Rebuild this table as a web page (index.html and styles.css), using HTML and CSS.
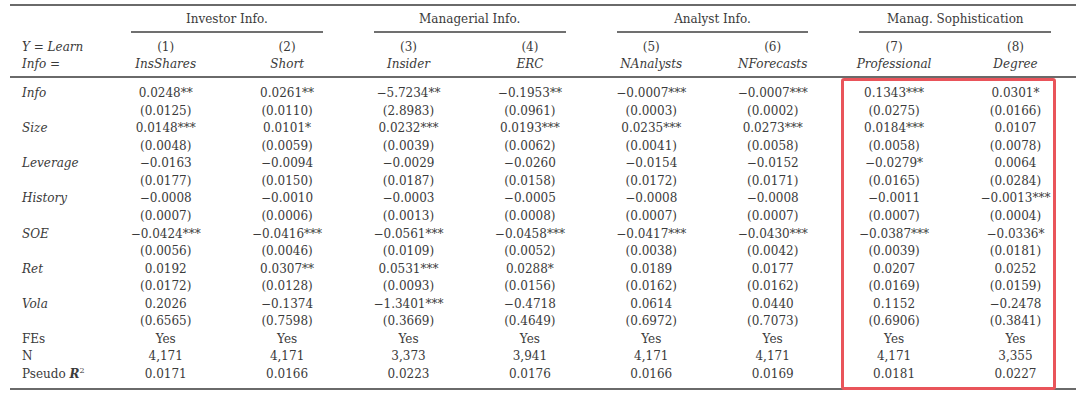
FILE: index.html
```html
<!DOCTYPE html>
<html>
<head>
<meta charset="utf-8">
<link rel="stylesheet" href="styles.css">
</head>
<body>
<div class="page">
<table class="reg">
  <colgroup>
    <col class="c-label">
    <col class="c-num"><col class="c-num"><col class="c-num"><col class="c-num">
    <col class="c-num"><col class="c-num"><col class="c-num"><col class="c-num">
  </colgroup>
  <thead>
    <tr class="grp">
      <th></th>
      <th colspan="2"><div class="gline">Investor Info.</div></th>
      <th colspan="2"><div class="gline">Managerial Info.</div></th>
      <th colspan="2"><div class="gline">Analyst Info.</div></th>
      <th colspan="2"><div class="gline">Manag. Sophistication</div></th>
    </tr>
    <tr class="hd1">
      <th class="lbl"><i>Y</i> = <i>Learn</i></th>
      <th>(1)</th><th>(2)</th><th>(3)</th><th>(4)</th><th>(5)</th><th>(6)</th><th>(7)</th><th>(8)</th>
    </tr>
    <tr class="hd2">
      <th class="lbl"><i>Info</i> =</th>
      <th><i>InsShares</i></th><th><i>Short</i></th><th><i>Insider</i></th><th><i>ERC</i></th>
      <th><i>NAnalysts</i></th><th><i>NForecasts</i></th><th><i>Professional</i></th><th><i>Degree</i></th>
    </tr>
  </thead>
  <tbody>
    <tr class="first"><td class="lbl"><i>Info</i></td><td>0.0248**</td><td>0.0261**</td><td>−5.7234**</td><td>−0.1953**</td><td>−0.0007***</td><td>−0.0007***</td><td>0.1343***</td><td>0.0301*</td></tr>
    <tr><td></td><td>(0.0125)</td><td>(0.0110)</td><td>(2.8983)</td><td>(0.0961)</td><td>(0.0003)</td><td>(0.0002)</td><td>(0.0275)</td><td>(0.0166)</td></tr>
    <tr><td class="lbl"><i>Size</i></td><td>0.0148***</td><td>0.0101*</td><td>0.0232***</td><td>0.0193***</td><td>0.0235***</td><td>0.0273***</td><td>0.0184***</td><td>0.0107</td></tr>
    <tr><td></td><td>(0.0048)</td><td>(0.0059)</td><td>(0.0039)</td><td>(0.0062)</td><td>(0.0041)</td><td>(0.0058)</td><td>(0.0058)</td><td>(0.0078)</td></tr>
    <tr><td class="lbl"><i>Leverage</i></td><td>−0.0163</td><td>−0.0094</td><td>−0.0029</td><td>−0.0260</td><td>−0.0154</td><td>−0.0152</td><td>−0.0279*</td><td>0.0064</td></tr>
    <tr><td></td><td>(0.0177)</td><td>(0.0150)</td><td>(0.0187)</td><td>(0.0158)</td><td>(0.0172)</td><td>(0.0171)</td><td>(0.0165)</td><td>(0.0284)</td></tr>
    <tr><td class="lbl"><i>History</i></td><td>−0.0008</td><td>−0.0010</td><td>−0.0003</td><td>−0.0005</td><td>−0.0008</td><td>−0.0008</td><td>−0.0011</td><td>−0.0013***</td></tr>
    <tr><td></td><td>(0.0007)</td><td>(0.0006)</td><td>(0.0013)</td><td>(0.0008)</td><td>(0.0007)</td><td>(0.0007)</td><td>(0.0007)</td><td>(0.0004)</td></tr>
    <tr><td class="lbl"><i>SOE</i></td><td>−0.0424***</td><td>−0.0416***</td><td>−0.0561***</td><td>−0.0458***</td><td>−0.0417***</td><td>−0.0430***</td><td>−0.0387***</td><td>−0.0336*</td></tr>
    <tr><td></td><td>(0.0056)</td><td>(0.0046)</td><td>(0.0109)</td><td>(0.0052)</td><td>(0.0038)</td><td>(0.0042)</td><td>(0.0039)</td><td>(0.0181)</td></tr>
    <tr><td class="lbl"><i>Ret</i></td><td>0.0192</td><td>0.0307**</td><td>0.0531***</td><td>0.0288*</td><td>0.0189</td><td>0.0177</td><td>0.0207</td><td>0.0252</td></tr>
    <tr><td></td><td>(0.0172)</td><td>(0.0128)</td><td>(0.0093)</td><td>(0.0156)</td><td>(0.0162)</td><td>(0.0162)</td><td>(0.0169)</td><td>(0.0159)</td></tr>
    <tr><td class="lbl"><i>Vola</i></td><td>0.2026</td><td>−0.1374</td><td>−1.3401***</td><td>−0.4718</td><td>0.0614</td><td>0.0440</td><td>0.1152</td><td>−0.2478</td></tr>
    <tr><td></td><td>(0.6565)</td><td>(0.7598)</td><td>(0.3669)</td><td>(0.4649)</td><td>(0.6972)</td><td>(0.7073)</td><td>(0.6906)</td><td>(0.3841)</td></tr>
    <tr><td class="lbl">FEs</td><td>Yes</td><td>Yes</td><td>Yes</td><td>Yes</td><td>Yes</td><td>Yes</td><td>Yes</td><td>Yes</td></tr>
    <tr><td class="lbl">N</td><td>4,171</td><td>4,171</td><td>3,373</td><td>3,941</td><td>4,171</td><td>4,171</td><td>4,171</td><td>3,355</td></tr>
    <tr class="last"><td class="lbl">Pseudo <i class="r">R</i><sup>2</sup></td><td>0.0171</td><td>0.0166</td><td>0.0223</td><td>0.0176</td><td>0.0166</td><td>0.0169</td><td>0.0181</td><td>0.0227</td></tr>
  </tbody>
</table>
<div class="highlight"></div>
</div>
</body>
</html>
```

FILE: styles.css
```css
html, body {
  margin: 0;
  padding: 0;
  background: #ffffff;
  overflow: hidden;
}

.page {
  position: relative;
  width: 1080px;
  height: 400px;
  padding: 4px 0 0 10px;
  box-sizing: border-box;
}

.reg {
  width: 1066px;
  table-layout: fixed;
  border-collapse: collapse;
  font-family: "DejaVu Serif", "Liberation Serif", serif;
  font-size: 12px;
  color: #3a3a3a;
  border-top: 2px solid #6a6a6a;
  border-bottom: 2px solid #6a6a6a;
}

.c-label { width: 95px; }
.c-num { width: 121.4px; }

.reg th,
.reg td {
  padding: 0;
  font-weight: normal;
  text-align: center;
  white-space: nowrap;
  line-height: 17.56px;
  height: 17.56px;
}

.reg .lbl {
  text-align: left;
  padding-left: 12px;
}

.grp th {
  padding: 0;
}

.gline {
  margin: 0 25px 0 26px;
  padding: 4px 0 3px;
  line-height: 18px;
  border-bottom: 2px solid #707070;
}

.hd1 th {
  padding-top: 6px;
  line-height: 17px;
  height: 17px;
}

.hd2 th {
  line-height: 17px;
  height: 17px;
  padding-bottom: 3px;
  border-bottom: 2px solid #6a6a6a;
}

.first td {
  padding-top: 7px;
}

.last td {
  padding-bottom: 4px;
}

.r {
  font-weight: bold;
}

sup {
  font-size: 8px;
  line-height: 0;
  vertical-align: 5px;
}

.highlight {
  position: absolute;
  left: 841px;
  top: 78px;
  width: 215px;
  height: 312px;
  border: 3px solid #e9545a;
  border-radius: 3px;
  box-sizing: border-box;
}
```
